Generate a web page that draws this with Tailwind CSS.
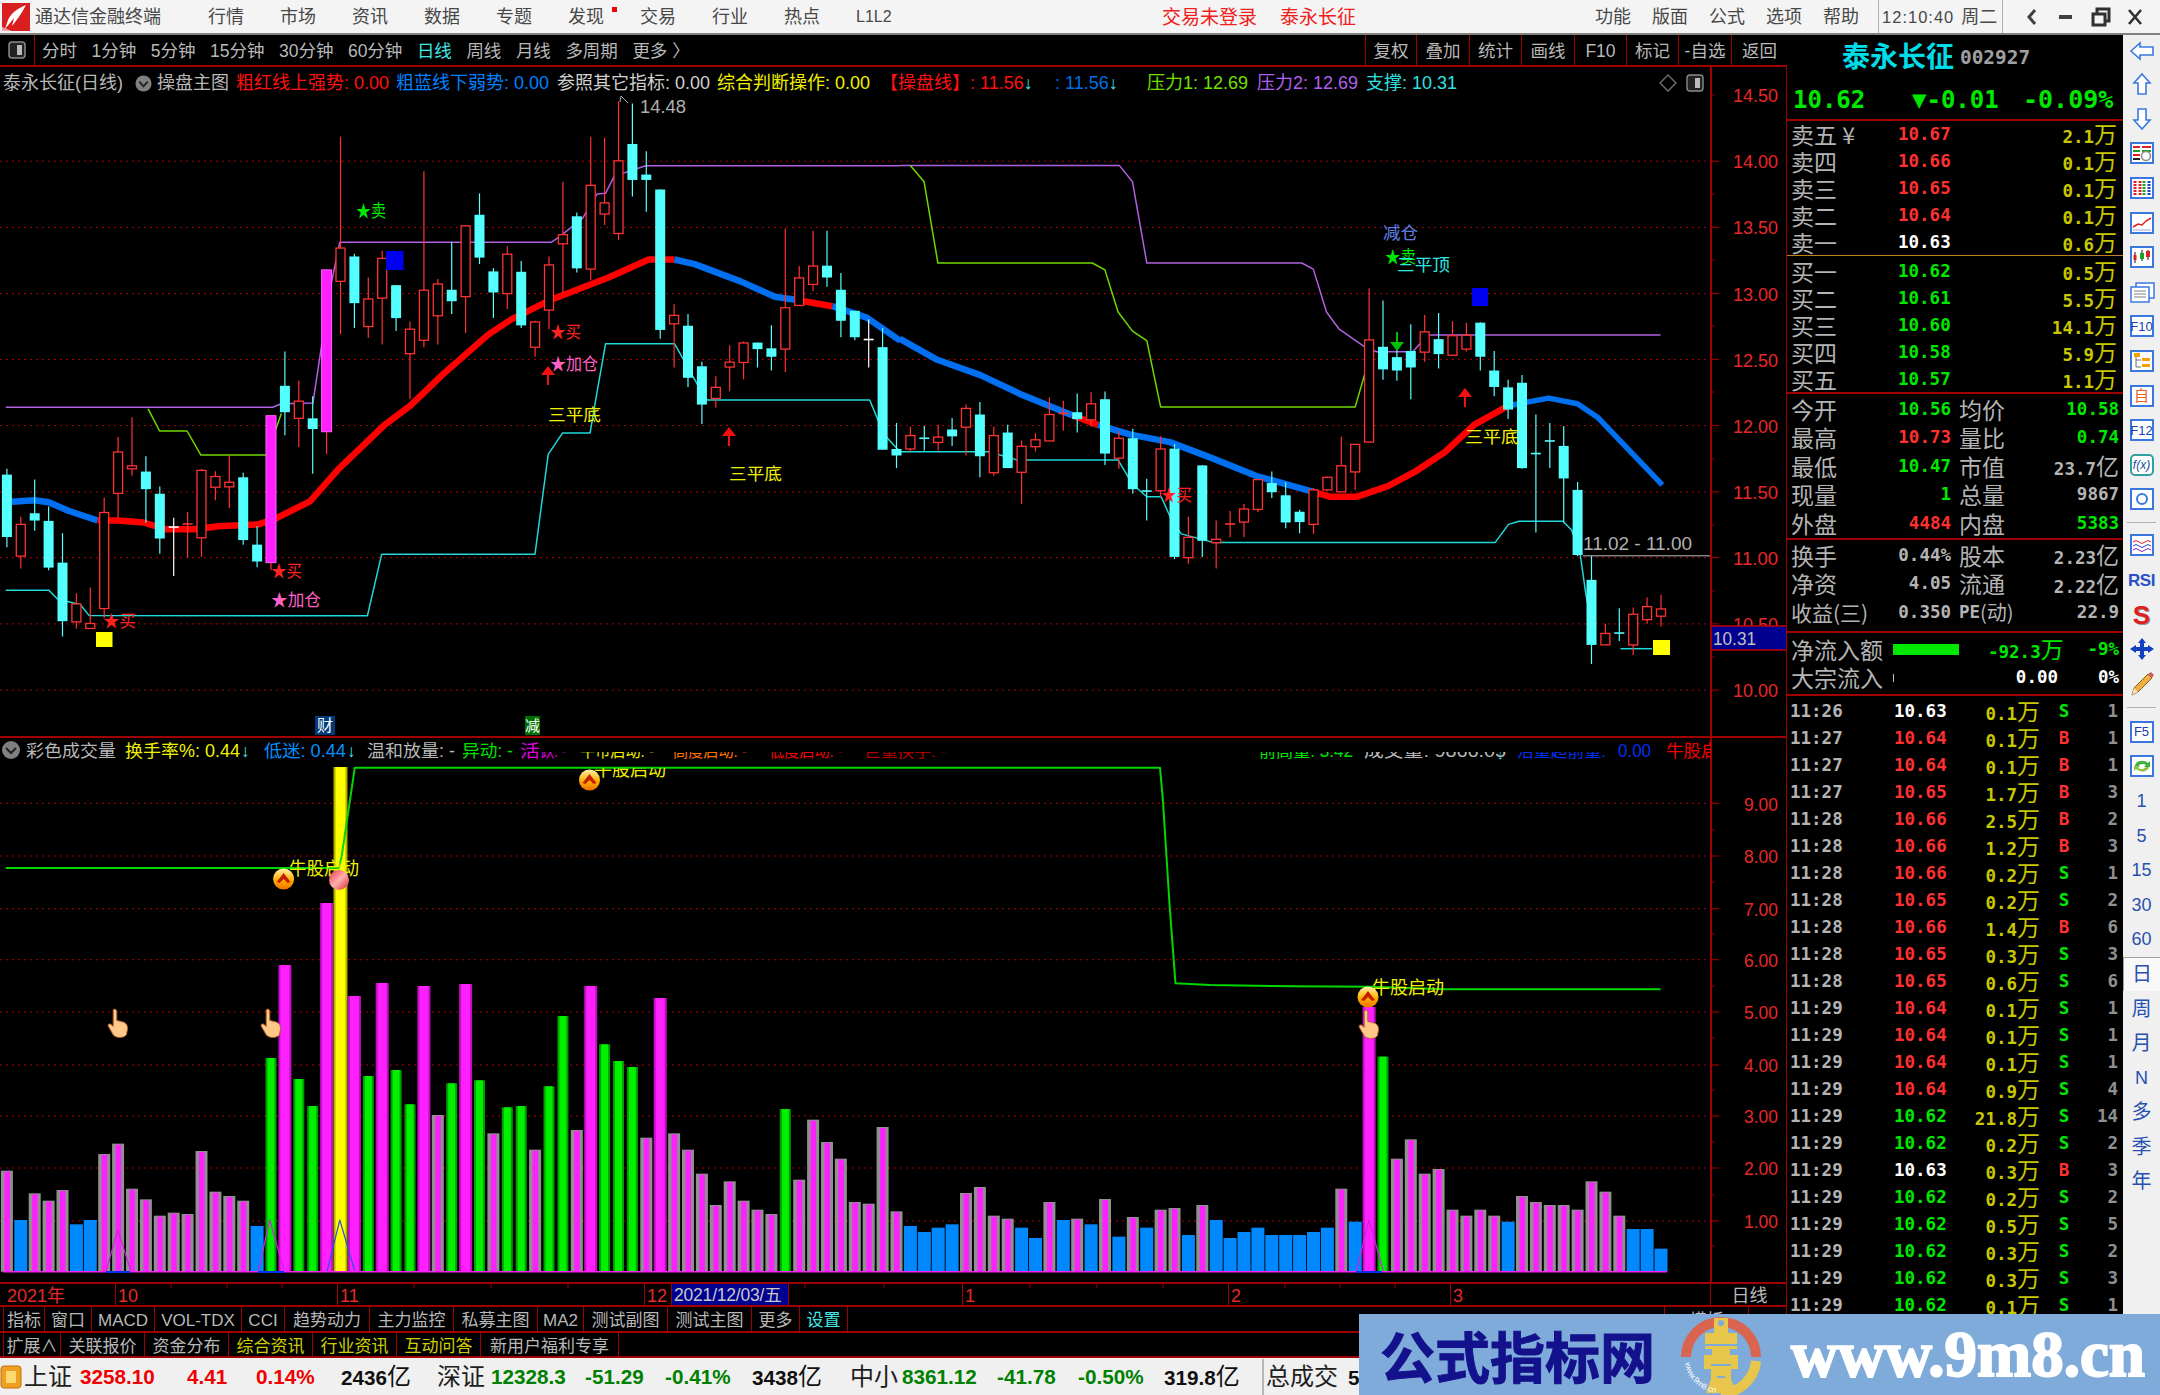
<!DOCTYPE html>
<html lang="zh">
<head>
<meta charset="utf-8">
<script src="https://cdn.jsdelivr.net/npm/@tailwindcss/browser@4"></script>
<title>通达信金融终端</title>
</head>
<body class="relative w-[2160px] h-[1395px] overflow-hidden bg-black [font-family:'Liberation_Sans','Noto_Sans_CJK_SC',sans-serif]">

<!-- title bar -->
<header class="h-[35px] flex items-center bg-[#f4f4f4] border-b-2 border-[#808080] text-[18px] text-[#484848] whitespace-nowrap leading-none">
  <svg class="ml-[2px] shrink-0" width="28" height="28" viewBox="0 0 28 28"><rect width="28" height="28" fill="#d81e1e"/><path d="M24 2 C16 5 9 10 6 17 L3 26 L12 15 L10 23 C15 17 20 10 24 2Z" fill="#fff"/><path d="M0 24 L0 28 L10 28Z" fill="#fff" opacity=".6"/></svg>
  <span class="ml-[5px] pt-[1px]">通达信金融终端</span>
  <nav class="ml-[47px] pt-[1px] flex gap-[36px]">
    <span>行情</span><span>市场</span><span>资讯</span><span>数据</span><span>专题</span>
    <span class="relative">发现<b class="absolute left-[44px] top-[-1px] w-[5px] h-[5px] bg-[#f00000]"></b></span>
    <span>交易</span><span>行业</span><span>热点</span><span class="text-[16px] pt-[1px] w-[35px]">L1L2</span>
  </nav>
  <span class="ml-[271px] pt-[1px] text-[19px] text-[#f02020]">交易未登录</span>
  <span class="ml-[23px] pt-[1px] text-[19px] text-[#f02020]">泰永长征</span>
  <nav class="ml-[239px] pt-[1px] flex gap-[21px]"><span>功能</span><span>版面</span><span>公式</span><span>选项</span><span>帮助</span></nav>
  <span class="ml-[19px] h-[33px] border-l border-[#b0b0b0]"></span>
  <span class="ml-[3px] pt-[1px] text-[16.5px] tracking-[1px]">12:10:40</span>
  <span class="ml-[7px] pt-[1px]">周二</span>
  <span class="ml-[5px] h-[33px] border-l border-[#b0b0b0]"></span>
  <svg class="ml-[22px]" width="14" height="20" viewBox="0 0 14 20"><path d="M10 3 L4 10 L10 17" fill="none" stroke="#404040" stroke-width="3"/></svg>
  <span class="ml-[20px] w-[13px] h-[4px] bg-[#404040]"></span>
  <svg class="ml-[19px]" width="20" height="20" viewBox="0 0 20 20"><rect x="6" y="2" width="12" height="12" fill="none" stroke="#303030" stroke-width="3"/><rect x="2" y="7" width="12" height="11" fill="#f4f4f4" stroke="#303030" stroke-width="3"/></svg>
  <svg class="ml-[16px]" width="16" height="20" viewBox="0 0 16 20"><path d="M2 3 L14 17 M14 3 L2 17" stroke="#303030" stroke-width="2.6"/></svg>
</header>

<div class="flex h-[1323px]">
  <!-- left column -->
  <main class="w-[1787px] shrink-0 flex flex-col">
    <!-- period toolbar -->
    <div class="h-[32px] shrink-0 flex items-center border-b-2 border-[#a00000] text-[17.5px] text-[#b8b8b8] whitespace-nowrap leading-none">
      <div class="w-[35px] h-full flex items-center justify-center border-r border-[#a00000]">
        <svg width="18" height="18" viewBox="0 0 18 18"><rect x="1" y="1" width="16" height="16" rx="3" fill="#222" stroke="#8a8a8a" stroke-width="1.5"/><rect x="9" y="4" width="5" height="10" fill="#bbb"/></svg>
      </div>
      <div class="ml-[7px] pt-[3px] flex gap-[14.5px]">
        <span>分时</span><span>1分钟</span><span>5分钟</span><span>15分钟</span><span>30分钟</span><span>60分钟</span><span class="text-[#40e8e8]">日线</span><span>周线</span><span>月线</span><span>多周期</span><span>更多 〉</span>
      </div>
      <div class="ml-auto h-full flex [&>span]:flex [&>span]:h-full [&>span]:items-center [&>span]:justify-center [&>span]:border-l [&>span]:border-[#a00000] [&>span]:pt-[3px]">
        <span class="w-[51px]">复权</span><span class="w-[53px]">叠加</span><span class="w-[52px]">统计</span><span class="w-[53px]">画线</span><span class="w-[52px]">F10</span><span class="w-[52px]">标记</span><span class="w-[53px]">-自选</span><span class="w-[56px]">返回</span>
      </div>
    </div>

    <!-- chart canvas -->
    <section class="relative h-[1215px] shrink-0 overflow-hidden">
      <svg id="chart" class="absolute inset-0 [&_text]:[transform:translateY(1px)]" width="1787" height="1215" viewBox="0 67 1787 1215" font-size="17.5">
        <defs>
          <linearGradient id="eg" x1="0" y1="0" x2="0" y2="1"><stop offset="0" stop-color="#fff2a8"/><stop offset=".55" stop-color="#ffb000"/><stop offset="1" stop-color="#ef7000"/></linearGradient>
          <linearGradient id="er" x1="0" y1="0" x2="1" y2="1"><stop offset="0" stop-color="#e83040"/><stop offset=".5" stop-color="#ffb0b0"/><stop offset="1" stop-color="#d82838"/></linearGradient>
          <g id="egg"><ellipse rx="10.5" ry="10.5" fill="url(#eg)"/><path d="M-7 3 L0 -6 L7 3 L4 4 L0 0 L-4 4Z" fill="#c42000"/></g>
          <g id="hand"><path transform="scale(1.2)" d="M-4 -12 C-2 -13 -1 -12 -1 -10 L-1 -3 L3 -2 C7 -1 8 1 8 4 L7 9 C5 12 -2 12 -4 9 L-8 2 C-9 0 -7 -1 -5 1 L-4 2 Z" fill="#ffc888" stroke="#a86028" stroke-width=".8"/></g>
          <clipPath id="halftext"><rect x="541" y="752" width="715" height="12"/></clipPath>
          <clipPath id="toptext"><rect x="590" y="768" width="90" height="14"/></clipPath>
          <clipPath id="axisclip"><rect x="1600" y="740" width="111" height="24"/></clipPath>
          <clipPath id="right-half"><rect x="1255" y="752" width="265" height="12"/></clipPath>
          <clipPath id="right-half2"><rect x="1510" y="752" width="100" height="12"/></clipPath>
        </defs>
        <g id="plot"></g>

        <!-- top chart marks -->
        <g>
          <path d="M620 102 L621 96 L628 103" fill="none" stroke="#b0b0b0"/>
          <text x="640" y="112" fill="#b0b0b0" textLength="46" lengthAdjust="spacingAndGlyphs">14.48</text>
          <text x="356" y="216" fill="#00e800" textLength="30" lengthAdjust="spacingAndGlyphs">★卖</text>
          <text x="103" y="626" fill="#ff2020" textLength="33" lengthAdjust="spacingAndGlyphs">★买</text>
          <text x="271" y="576" fill="#ff2020" textLength="31" lengthAdjust="spacingAndGlyphs">★买</text>
          <text x="271" y="605" fill="#ff60c8" textLength="50" lengthAdjust="spacingAndGlyphs">★加仓</text>
          <text x="550" y="337" fill="#ff2020" textLength="31" lengthAdjust="spacingAndGlyphs">★买</text>
          <text x="550" y="369" fill="#ff60c8" textLength="48" lengthAdjust="spacingAndGlyphs">★加仓</text>
          <text x="548" y="420" fill="#f0f000" textLength="53" lengthAdjust="spacingAndGlyphs">三平底</text>
          <text x="729" y="479" fill="#f0f000" textLength="53" lengthAdjust="spacingAndGlyphs">三平底</text>
          <text x="1383" y="238" fill="#6080e8" textLength="35" lengthAdjust="spacingAndGlyphs">减仓</text>
          <text x="1385" y="262" fill="#00e800" textLength="31" lengthAdjust="spacingAndGlyphs">★卖</text>
          <text x="1397" y="270" fill="#30e8e8" textLength="53" lengthAdjust="spacingAndGlyphs">三平顶</text>
          <text x="1465" y="442" fill="#f0f000" textLength="54" lengthAdjust="spacingAndGlyphs">三平底</text>
          <text x="1161" y="500" fill="#ff2020" textLength="31" lengthAdjust="spacingAndGlyphs">★买</text>
          <text x="1583" y="549" fill="#b0b0b0" textLength="109" lengthAdjust="spacingAndGlyphs">11.02 - 11.00</text>
          <path d="M548 366 l7 9 h-6 v10 h-2 v-10 h-6z" fill="#f01010"/>
          <path d="M729 427 l7 9 h-6 v10 h-2 v-10 h-6z" fill="#f01010"/>
          <path d="M1465 388 l7 9 h-6 v10 h-2 v-10 h-6z" fill="#f01010"/>
          <path d="M1397 351 l7 -9 h-6 v-10 h-2 v10 h-6z" fill="#00c000"/>
          <rect x="386" y="251" width="17.5" height="19" fill="#0000f0"/>
          <rect x="1472" y="288" width="16" height="18" fill="#0000f0"/>
          <rect x="96" y="632" width="16.5" height="15" fill="#ffff00"/>
          <rect x="1653" y="640" width="17" height="15" fill="#ffff00"/>
        </g>

        <!-- axis labels -->
        <g fill="#e82828">
          <text x="1733" y="101" textLength="45" lengthAdjust="spacingAndGlyphs">14.50</text>
          <text x="1733" y="167" textLength="45" lengthAdjust="spacingAndGlyphs">14.00</text>
          <text x="1733" y="233" textLength="45" lengthAdjust="spacingAndGlyphs">13.50</text>
          <text x="1733" y="300" textLength="45" lengthAdjust="spacingAndGlyphs">13.00</text>
          <text x="1733" y="366" textLength="45" lengthAdjust="spacingAndGlyphs">12.50</text>
          <text x="1733" y="432" textLength="45" lengthAdjust="spacingAndGlyphs">12.00</text>
          <text x="1733" y="498" textLength="45" lengthAdjust="spacingAndGlyphs">11.50</text>
          <text x="1733" y="564" textLength="45" lengthAdjust="spacingAndGlyphs">11.00</text>
          <text x="1733" y="630" textLength="45" lengthAdjust="spacingAndGlyphs">10.50</text>
          <text x="1733" y="696" textLength="45" lengthAdjust="spacingAndGlyphs">10.00</text>
          <text x="1744" y="810" textLength="34" lengthAdjust="spacingAndGlyphs">9.00</text>
          <text x="1744" y="862" textLength="34" lengthAdjust="spacingAndGlyphs">8.00</text>
          <text x="1744" y="915" textLength="34" lengthAdjust="spacingAndGlyphs">7.00</text>
          <text x="1744" y="966" textLength="34" lengthAdjust="spacingAndGlyphs">6.00</text>
          <text x="1744" y="1018" textLength="34" lengthAdjust="spacingAndGlyphs">5.00</text>
          <text x="1744" y="1071" textLength="34" lengthAdjust="spacingAndGlyphs">4.00</text>
          <text x="1744" y="1122" textLength="34" lengthAdjust="spacingAndGlyphs">3.00</text>
          <text x="1744" y="1174" textLength="34" lengthAdjust="spacingAndGlyphs">2.00</text>
          <text x="1744" y="1227" textLength="34" lengthAdjust="spacingAndGlyphs">1.00</text>
        </g>
        <rect x="1712" y="626" width="74" height="24" fill="#000090"/>
        <path d="M1712 626 H1786 M1712 650 H1786" stroke="#c00000" stroke-width="1.5"/>
        <text x="1713" y="644" fill="#c0c0c0" textLength="43" lengthAdjust="spacingAndGlyphs">10.31</text>

        <!-- news badges above the divider -->
        <rect x="315" y="716" width="20" height="19" fill="#003a78"/>
        <text x="317" y="730" fill="#fff" font-size="16">财</text>
        <rect x="525" y="716" width="15" height="19" fill="#007000"/>
        <text x="525" y="730" fill="#fff" font-size="15" textLength="15" lengthAdjust="spacingAndGlyphs">减</text>

        <!-- lower chart header -->
        <circle cx="11" cy="750" r="9" fill="#808080"/>
        <path d="M6 748 L11 753 L16 748" fill="none" stroke="#202020" stroke-width="2"/>
        <text x="26" y="756" fill="#b8b8b8" textLength="90" lengthAdjust="spacingAndGlyphs">彩色成交量</text>
        <text x="125" y="756" fill="#f0f000" textLength="115" lengthAdjust="spacingAndGlyphs">换手率%: 0.44</text>
        <text x="241" y="756" fill="#40e8f0">↓</text>
        <text x="264" y="756" fill="#0090ff" textLength="82" lengthAdjust="spacingAndGlyphs">低迷: 0.44</text>
        <text x="347" y="756" fill="#40e8f0">↓</text>
        <text x="367" y="756" fill="#b8b8b8" textLength="88" lengthAdjust="spacingAndGlyphs">温和放量: -</text>
        <text x="462" y="756" fill="#00e000" textLength="51" lengthAdjust="spacingAndGlyphs">异动: -</text>
        <text x="520" y="756" fill="#e000e0" textLength="20" lengthAdjust="spacingAndGlyphs">活</text>
        <g clip-path="url(#halftext)">
          <text x="541" y="756" fill="#e000e0" textLength="25" lengthAdjust="spacingAndGlyphs">跃: -</text>
          <text x="580" y="756" fill="#f0f000" textLength="74" lengthAdjust="spacingAndGlyphs">牛市启动: -</text>
          <text x="673" y="756" fill="#ff7000" textLength="74" lengthAdjust="spacingAndGlyphs">高度启动: -</text>
          <text x="769" y="756" fill="#f00000" textLength="74" lengthAdjust="spacingAndGlyphs">低度启动: -</text>
          <text x="864" y="756" fill="#b00000" textLength="82" lengthAdjust="spacingAndGlyphs">巨量换手: -</text>
        </g>
        <g clip-path="url(#right-half)">
          <text x="1259" y="756" fill="#00e000" textLength="94" lengthAdjust="spacingAndGlyphs">前高量: 3.42</text>
          <text x="1364" y="756" fill="#b8b8b8" textLength="142" lengthAdjust="spacingAndGlyphs">成交量: 9866.05</text>
        </g>
        <text x="1497" y="758" fill="#40e8f0" font-size="13">↓</text>
        <g clip-path="url(#right-half2)">
          <text x="1517" y="756" fill="#0030f0" textLength="89" lengthAdjust="spacingAndGlyphs">活量超前量:</text>
        </g>
        <text x="1618" y="756" fill="#0030f0" textLength="33" lengthAdjust="spacingAndGlyphs">0.00</text>
        <g clip-path="url(#axisclip)"><text x="1666" y="756" fill="#f00000" textLength="70" lengthAdjust="spacingAndGlyphs">牛股启动</text></g>

        <!-- lower chart marks -->
        <text x="289" y="874" fill="#f0f000" textLength="70" lengthAdjust="spacingAndGlyphs" font-size="18">牛股启动</text>
        <g clip-path="url(#toptext)"><text x="594" y="775" fill="#f0f000" textLength="72" lengthAdjust="spacingAndGlyphs" font-size="18">牛股启动</text></g>
        <text x="1372" y="993" fill="#f0f000" textLength="72" lengthAdjust="spacingAndGlyphs" font-size="18">牛股启动</text>
        <use href="#egg" x="283.6" y="879"/>
        <g transform="translate(339 880)"><ellipse rx="10" ry="10" fill="url(#er)"/></g>
        <use href="#egg" x="589.5" y="780"/>
        <use href="#egg" x="1368" y="997"/>
        <use href="#hand" x="118" y="1024"/>
        <use href="#hand" x="271" y="1024"/>
        <use href="#hand" x="1369" y="1025"/>
      </svg>

      <!-- top chart legend -->
      <div class="absolute left-0 top-[3px] h-[26px] pl-[3px] flex items-center text-[18px] leading-none whitespace-nowrap">
        <span class="w-[132px] text-[#b8b8b8]">泰永长征(日线)</span>
        <svg class="w-[17px] mr-[5px] shrink-0" width="17" height="17" viewBox="0 0 18 18"><circle cx="9" cy="9" r="8.5" fill="#808080"/><path d="M4.5 7 L9 12 L13.5 7" fill="none" stroke="#202020" stroke-width="2"/></svg>
        <span class="w-[79px] text-[#b8b8b8]">操盘主图</span>
        <span class="w-[160px] text-[#ff1010]">粗红线上强势: 0.00</span>
        <span class="w-[161px] text-[#0080ff]">粗蓝线下弱势: 0.00</span>
        <span class="w-[160px] text-[#d0d0d0]">参照其它指标: 0.00</span>
        <span class="w-[163px] text-[#f0f000]">综合判断操作: 0.00</span>
        <span class="w-[175px] text-[#ff1010]">【操盘线】: 11.56<b class="font-normal text-[#40e8f0]">↓</b></span>
        <span class="w-[92px] text-[#0070e0]">: 11.56<b class="font-normal text-[#40e8f0]">↓</b></span>
        <span class="w-[110px] text-[#70e000]">压力1: 12.69</span>
        <span class="w-[109px] text-[#b060f0]">压力2: 12.69</span>
        <span class="w-[100px] text-[#30e0e0]">支撑: 10.31</span>
      </div>
      <svg class="absolute left-[1658px] top-[6px]" width="48" height="20" viewBox="0 0 48 20"><path d="M10 2 L18 10 L10 18 L2 10Z" fill="none" stroke="#707070" stroke-width="1.4"/><rect x="29" y="2" width="16" height="16" rx="3" fill="#222" stroke="#8a8a8a" stroke-width="1.4"/><rect x="37" y="5" width="5" height="10" fill="#bbb"/></svg>
    </section>

    <!-- date axis -->
    <div class="relative h-[23px] shrink-0 flex items-center border-t-2 border-[#a00000] text-[18px] leading-none text-[#e82828] whitespace-nowrap [&>span]:h-full [&>span]:flex [&>span]:items-center [&>span]:shrink-0 [&>span]:border-r [&>span]:border-[#a00000] [&>span]:pl-[2px] [&>span]:pt-[2px]">
      <span class="w-[116px] !pl-[7px]">2021年</span>
      <span class="w-[222px]">10</span>
      <span class="w-[307px]">11</span>
      <span class="w-[27px]">12</span>
      <span class="w-[117px] bg-[#000090] text-[#c8c8c8] text-[17.5px] tracking-[-0.2px]">2021/12/03/五</span>
      <span class="w-[174px]"></span>
      <span class="w-[266px]">1</span>
      <span class="w-[222px]">2</span>
      <span class="w-[260px]">3</span>
      <span class="w-[76px] justify-center text-[#b8b8b8]">日线</span>
      <svg class="absolute left-0 top-0" width="1711" height="5"><path d="M171 0v4M227 0v4M282 0v4M414 0v4M491 0v4M568 0v4M805 0v4M884 0v4M1030 0v4M1097 0v4M1163 0v4M1285 0v4M1340 0v4M1395 0v4" stroke="#a00000"/></svg>
    </div>

    <!-- indicator tabs -->
    <div class="h-[26px] shrink-0 flex border-t-2 border-[#a00000] pl-[3px] text-[17px] leading-none text-[#b8b8b8] whitespace-nowrap [&>span]:flex [&>span]:items-center [&>span]:justify-center [&>span]:h-full [&>span]:shrink-0 [&>span]:border-r [&>span]:border-[#a00000] [&>span]:pt-[2px]">
      <span class="w-[42px] border-l border-[#a00000]">指标</span><span class="w-[47px]">窗口</span><span class="w-[63px]">MACD</span><span class="w-[87px]">VOL-TDX</span><span class="w-[43px]">CCI</span><span class="w-[85px]">趋势动力</span><span class="w-[84px]">主力监控</span><span class="w-[84px]">私募主图</span><span class="w-[46px]">MA2</span><span class="w-[84px]">测试副图</span><span class="w-[84px]">测试主图</span><span class="w-[48px]">更多</span><span class="w-[48px] text-[#40e8e8]">设置</span>
      <span class="w-[817px]"></span><span class="w-[84px]">模板</span><span class="w-[38px]"></span>
    </div>
    <div class="h-[27px] shrink-0 flex border-t-2 border-b-2 border-[#a00000] pl-[3px] text-[17px] leading-none text-[#b8b8b8] whitespace-nowrap [&>span]:flex [&>span]:items-center [&>span]:justify-center [&>span]:h-full [&>span]:shrink-0 [&>span]:border-r [&>span]:border-[#a00000] [&>span]:pt-[3px]">
      <span class="w-[58px] border-l border-[#a00000]">扩展∧</span><span class="w-[84px]">关联报价</span><span class="w-[84px]">资金分布</span><span class="w-[84px] text-[#d0d000]">综合资讯</span><span class="w-[84px] text-[#d0d000]">行业资讯</span><span class="w-[84px] text-[#d0d000]">互动问答</span><span class="w-[138px]">新用户福利专享</span>
    </div>
  </main>

  <!-- quote panel -->
  <aside class="w-[336px] shrink-0 flex flex-col bg-black text-[17.5px] font-bold leading-none text-[#b4b4b4] whitespace-nowrap [font-family:'DejaVu_Sans_Mono','Noto_Sans_CJK_SC',monospace] [&_i]:not-italic [&_i]:font-normal [&_i]:text-[23px] [&_i]:[font-family:'Noto_Sans_CJK_SC',sans-serif]">
    <div class="h-[45px] shrink-0 pl-[55px] pb-[5px] flex items-center">
      <span class="text-[28px] font-bold text-[#00dce8] [font-family:'Noto_Sans_CJK_SC',sans-serif]">泰永长征</span>
      <span class="ml-[6px] mt-[6px] text-[19.4px] text-[#a0a0a0]">002927</span>
    </div>
    <div class="h-[39px] shrink-0 pl-[6px] flex items-center text-[24px] text-[#00e800]">
      <span class="w-[119px]">10.62</span><span class="w-[111px]">▼-0.01</span><span class="text-[25px]">-0.09%</span>
    </div>
    <div class="h-[137px] shrink-0 border-t-2 border-[#a00000] pl-[4px] pr-[6px] grid grid-cols-[107px_53px_1fr] auto-rows-[27px] items-center border-b border-b-[#c08020] [&>:nth-child(3n)]:text-right [&>:nth-child(3n)]:text-[#c8c800]">
      <i>卖五 ¥</i><span class="text-[#ff3030]">10.67</span><span>2.1<i>万</i></span>
      <i>卖四</i><span class="text-[#ff3030]">10.66</span><span>0.1<i>万</i></span>
      <i>卖三</i><span class="text-[#ff3030]">10.65</span><span>0.1<i>万</i></span>
      <i>卖二</i><span class="text-[#ff3030]">10.64</span><span>0.1<i>万</i></span>
      <i>卖一</i><span class="text-white">10.63</span><span>0.6<i>万</i></span>
    </div>
    <div class="h-[138px] shrink-0 pt-[2px] border-b-2 border-[#a00000] pl-[4px] pr-[6px] grid grid-cols-[107px_53px_1fr] auto-rows-[27px] items-center [&>:nth-child(3n)]:text-right [&>:nth-child(3n)]:text-[#c8c800]">
      <i>买一</i><span class="text-[#00e800]">10.62</span><span>0.5<i>万</i></span>
      <i>买二</i><span class="text-[#00e800]">10.61</span><span>5.5<i>万</i></span>
      <i>买三</i><span class="text-[#00e800]">10.60</span><span>14.1<i>万</i></span>
      <i>买四</i><span class="text-[#00e800]">10.58</span><span>5.9<i>万</i></span>
      <i>买五</i><span class="text-[#00e800]">10.57</span><span>1.1<i>万</i></span>
    </div>
    <div class="h-[146px] shrink-0 pt-[1px] border-b-2 border-[#a00000] pl-[4px] pr-[4px] grid grid-cols-[107px_53px_60px_1fr] auto-rows-[28.5px] items-center [&>:nth-child(4n+2)]:text-right [&>:nth-child(4n+3)]:pl-[8px] [&>:nth-child(4n)]:text-right">
      <i>今开</i><span class="text-[#00e800]">10.56</span><i>均价</i><span class="text-[#00e800]">10.58</span>
      <i>最高</i><span class="text-[#ff3030]">10.73</span><i>量比</i><span class="text-[#00e800]">0.74</span>
      <i>最低</i><span class="text-[#00e800]">10.47</span><i>市值</i><span>23.7<i>亿</i></span>
      <i>现量</i><span class="text-[#00e800]">1</span><i>总量</i><span>9867</span>
      <i>外盘</i><span class="text-[#ff3030]">4484</span><i>内盘</i><span class="text-[#00e800]">5383</span>
    </div>
    <div class="h-[93px] shrink-0 pt-[1px] border-b-2 border-[#a00000] pl-[4px] pr-[4px] grid grid-cols-[107px_53px_60px_1fr] auto-rows-[28.5px] items-center [&>:nth-child(4n+2)]:text-right [&>:nth-child(4n+3)]:pl-[8px] [&>:nth-child(4n)]:text-right">
      <i>换手</i><span class="justify-self-end">0.44%</span><i>股本</i><span>2.23<i>亿</i></span>
      <i>净资</i><span>4.05</span><i>流通</i><span>2.22<i>亿</i></span>
      <i class="!text-[21px]">收益(三)</i><span>0.350</span><span class="flex items-center">PE<i class="!text-[20px]">(动)</i></span><span>22.9</span>
    </div>
    <div class="h-[63px] shrink-0 pt-[2px] border-b-2 border-[#a00000] pl-[4px] pr-[4px] grid grid-cols-[102px_95px_70px_1fr] auto-rows-[28.5px] items-center [&>:nth-child(4n+3)]:text-right [&>:nth-child(4n)]:text-right">
      <i>净流入额</i><span class="w-[66px] h-[11px] bg-[#00e800]"></span><span class="text-[#00e800]">-92.3<i>万</i></span><span class="text-[#00e800]">-9%</span>
      <i>大宗流入</i><span class="w-[1px] h-[8px] bg-[#c0c0c0]"></span><span class="text-white">0.00</span><span class="text-white">0%</span>
    </div>
    <div class="pt-[2px] grid grid-cols-[107px_52px_94px_48px_1fr] auto-rows-[27px] items-center overflow-hidden [&>:nth-child(5n+1)]:pl-[3px] [&>:nth-child(5n+3)]:text-right [&>:nth-child(5n+3)]:text-[#c8c800] [&>:nth-child(5n+4)]:text-center [&>:nth-child(5n)]:text-right [&>:nth-child(5n)]:pr-[5px] [&>:nth-child(5n)]:text-[#909090]">
      <span>11:26</span><span class="text-white">10.63</span><span>0.1<i>万</i></span><span class="text-[#00e800]">S</span><span>1</span>
      <span>11:27</span><span class="text-[#ff3030]">10.64</span><span>0.1<i>万</i></span><span class="text-[#ff3030]">B</span><span>1</span>
      <span>11:27</span><span class="text-[#ff3030]">10.64</span><span>0.1<i>万</i></span><span class="text-[#ff3030]">B</span><span>1</span>
      <span>11:27</span><span class="text-[#ff3030]">10.65</span><span>1.7<i>万</i></span><span class="text-[#ff3030]">B</span><span>3</span>
      <span>11:28</span><span class="text-[#ff3030]">10.66</span><span>2.5<i>万</i></span><span class="text-[#ff3030]">B</span><span>2</span>
      <span>11:28</span><span class="text-[#ff3030]">10.66</span><span>1.2<i>万</i></span><span class="text-[#ff3030]">B</span><span>3</span>
      <span>11:28</span><span class="text-[#ff3030]">10.66</span><span>0.2<i>万</i></span><span class="text-[#00e800]">S</span><span>1</span>
      <span>11:28</span><span class="text-[#ff3030]">10.65</span><span>0.2<i>万</i></span><span class="text-[#00e800]">S</span><span>2</span>
      <span>11:28</span><span class="text-[#ff3030]">10.66</span><span>1.4<i>万</i></span><span class="text-[#ff3030]">B</span><span>6</span>
      <span>11:28</span><span class="text-[#ff3030]">10.65</span><span>0.3<i>万</i></span><span class="text-[#00e800]">S</span><span>3</span>
      <span>11:28</span><span class="text-[#ff3030]">10.65</span><span>0.6<i>万</i></span><span class="text-[#00e800]">S</span><span>6</span>
      <span>11:29</span><span class="text-[#ff3030]">10.64</span><span>0.1<i>万</i></span><span class="text-[#00e800]">S</span><span>1</span>
      <span>11:29</span><span class="text-[#ff3030]">10.64</span><span>0.1<i>万</i></span><span class="text-[#00e800]">S</span><span>1</span>
      <span>11:29</span><span class="text-[#ff3030]">10.64</span><span>0.1<i>万</i></span><span class="text-[#00e800]">S</span><span>1</span>
      <span>11:29</span><span class="text-[#ff3030]">10.64</span><span>0.9<i>万</i></span><span class="text-[#00e800]">S</span><span>4</span>
      <span>11:29</span><span class="text-[#00e800]">10.62</span><span>21.8<i>万</i></span><span class="text-[#00e800]">S</span><span>14</span>
      <span>11:29</span><span class="text-[#00e800]">10.62</span><span>0.2<i>万</i></span><span class="text-[#00e800]">S</span><span>2</span>
      <span>11:29</span><span class="text-white">10.63</span><span>0.3<i>万</i></span><span class="text-[#ff3030]">B</span><span>3</span>
      <span>11:29</span><span class="text-[#00e800]">10.62</span><span>0.2<i>万</i></span><span class="text-[#00e800]">S</span><span>2</span>
      <span>11:29</span><span class="text-[#00e800]">10.62</span><span>0.5<i>万</i></span><span class="text-[#00e800]">S</span><span>5</span>
      <span>11:29</span><span class="text-[#00e800]">10.62</span><span>0.3<i>万</i></span><span class="text-[#00e800]">S</span><span>2</span>
      <span>11:29</span><span class="text-[#00e800]">10.62</span><span>0.3<i>万</i></span><span class="text-[#00e800]">S</span><span>3</span>
      <span>11:29</span><span class="text-[#00e800]">10.62</span><span>0.1<i>万</i></span><span class="text-[#00e800]">S</span><span>1</span>
    </div>
  </aside>

  <!-- icon rail -->
  <div class="w-[37px] shrink-0 flex flex-col items-center bg-[#f0f0f0] text-[#2850b0] text-[18px] leading-none [&>div]:h-[34.6px] [&>div]:w-full [&>div]:shrink-0 [&>div]:flex [&>div]:items-center [&>div]:justify-center [&_b]:w-[24px] [&_b]:h-[22px] [&_b]:border-2 [&_b]:border-[#3a78e0] [&_b]:bg-white [&_b]:flex [&_b]:items-center [&_b]:justify-center [&_b]:text-[13px] [&_b]:font-normal">
    <div class="!h-[32px]"><svg width="26" height="20" viewBox="0 0 26 20"><path d="M2 10 L11 2 V6 H24 V14 H11 V18Z" fill="#fff" stroke="#3a78e0" stroke-width="1.6"/></svg></div>
    <div><svg width="20" height="24" viewBox="0 0 20 24"><path d="M10 2 L18 11 H14 V22 H6 V11 H2Z" fill="#fff" stroke="#3a78e0" stroke-width="1.6"/></svg></div>
    <div><svg width="20" height="24" viewBox="0 0 20 24"><path d="M10 22 L18 13 H14 V2 H6 V13 H2Z" fill="#fff" stroke="#3a78e0" stroke-width="1.6"/></svg></div>
    <div><b><svg width="20" height="18" viewBox="0 0 20 18"><path d="M1 3H8M10 3H19" stroke="#e02020" stroke-width="2"/><path d="M1 7H8M10 7H19" stroke="#20a020" stroke-width="2"/><path d="M1 11H8" stroke="#e02020" stroke-width="2"/><path d="M1 15H8" stroke="#202020" stroke-width="2"/><circle cx="14" cy="12" r="4.5" fill="#fff" stroke="#909090" stroke-width="1.6"/></svg></b></div>
    <div><b><svg width="20" height="18" viewBox="0 0 20 18"><path d="M3 2V16M8 2V16" stroke="#e02020" stroke-width="3" stroke-dasharray="2 1"/><path d="M12 2V16" stroke="#20a020" stroke-width="3" stroke-dasharray="2 1"/><path d="M17 2V16" stroke="#2040d0" stroke-width="3" stroke-dasharray="2 1"/></svg></b></div>
    <div><b><svg width="20" height="18" viewBox="0 0 20 18"><path d="M1 13 L6 10 L10 11 L14 7 L19 4" fill="none" stroke="#e02020" stroke-width="1.5"/><path d="M1 16H19" stroke="#a0a0d0"/></svg></b></div>
    <div><b><svg width="20" height="18" viewBox="0 0 20 18"><path d="M3 4V15M10 2V13M16 2V12" stroke="#101010"/><rect x="1.5" y="7" width="3" height="5" fill="#e02020"/><rect x="8" y="5" width="4" height="6" fill="#20a020"/><rect x="14" y="3" width="4" height="6" fill="#e02020"/></svg></b></div>
    <div><svg width="26" height="22" viewBox="0 0 26 22"><rect x="7" y="2" width="18" height="15" fill="#fff" stroke="#3a78e0" stroke-width="1.5"/><rect x="2" y="6" width="18" height="15" fill="#fff" stroke="#3a78e0" stroke-width="1.5"/><path d="M5 10H17M5 13H17M5 16H17" stroke="#808080"/></svg></div>
    <div><b class="text-[#2040b0]">F10</b></div>
    <div><b><svg width="20" height="18" viewBox="0 0 20 18"><path d="M4 2V15H9M4 8H9" fill="none" stroke="#707070"/><rect x="2" y="1" width="6" height="4" fill="#f0a000"/><rect x="10" y="6" width="8" height="3" fill="#f0a000"/><rect x="10" y="12" width="8" height="3" fill="#f0a000"/></svg></b></div>
    <div><b class="!text-[15px] !text-[#e86020]">自</b></div>
    <div><b class="text-[#2040b0]">F12</b></div>
    <div><b class="!rounded-[5px] !border-[#30a0a0] !text-[12px] !text-[#1050a0] italic">f(x)</b></div>
    <div><b><svg width="18" height="14" viewBox="0 0 18 14"><circle cx="9" cy="7" r="5" fill="none" stroke="#3a78e0" stroke-width="2"/></svg></b></div>
    <span class="h-[11.4px] w-[29px] shrink-0 flex items-center"><span class="w-full h-[1px] bg-[#b0b0b0]"></span></span>
    <div><b><svg width="20" height="16" viewBox="0 0 20 16"><path d="M1 5 Q4 2 7 5 T13 5 T19 5" fill="none" stroke="#e02020"/><path d="M1 9 Q4 6 7 9 T13 9 T19 9" fill="none" stroke="#2040d0"/><path d="M1 13 Q4 10 7 13 T13 13 T19 13" fill="none" stroke="#8020c0"/></svg></b></div>
    <div><span class="text-[#2a50c8] font-bold text-[17px] tracking-[-0.5px]">RSI</span></div>
    <div><span class="text-[#e02020] font-bold text-[26px] [text-shadow:1px_1px_0_#909090]">S</span></div>
    <div><svg width="26" height="24" viewBox="0 0 26 24"><path d="M13 1 L17 6 H15 V10 H19 V8 L25 12 L19 16 V14 H15 V18 H17 L13 23 L9 18 H11 V14 H7 V16 L1 12 L7 8 V10 H11 V6 H9Z" fill="#1040c0"/></svg></div>
    <div><svg width="26" height="26" viewBox="0 0 26 26"><path d="M3 24 L5 17 L19 3 L23 7 L9 21Z" fill="#f0b040" stroke="#806020"/><path d="M3 24 L5 17 L9 21Z" fill="#f8e0c0"/><path d="M19 3 L23 7 L25 4 L22 1Z" fill="#d06060"/></svg></div>
    <span class="h-[13.4px] w-[29px] shrink-0 flex items-center"><span class="w-full h-[1px] bg-[#b0b0b0]"></span></span>
    <div><b class="text-[#2040b0]">F5</b></div>
    <div><b><svg width="20" height="16" viewBox="0 0 20 16"><path d="M3 8 C3 3 12 1 16 5 L18 3 V9 H12 L14 7 C11 5 7 6 6 9Z" fill="#40b040"/><path d="M17 9 C16 14 8 15 4 11 L2 13 V8 H8 L6 10 C9 12 12 11 14 9Z" fill="#90c040"/></svg></b></div>
    <div>1</div><div>5</div><div>15</div><div>30</div><div>60</div>
    <div class="border-t border-l border-[#a0a0a0] bg-[#f8f8f8] text-[20px]">日</div>
    <div class="text-[20px]">周</div><div class="text-[20px]">月</div><div>N</div><div class="text-[20px]">多</div><div class="text-[20px]">季</div><div class="text-[20px]">年</div>
  </div>
</div>

<!-- index status bar -->
<footer class="h-[37px] pt-[1px] flex items-center bg-[#f0f0f0] text-[20.7px] font-bold leading-none whitespace-nowrap [&_i]:not-italic [&_i]:font-normal [&_i]:text-[24px]">
  <svg class="w-[24px] shrink-0" width="24" height="26" viewBox="0 0 24 26"><rect x="1" y="2" width="20" height="22" rx="3" fill="#f0a020" stroke="#c07010"/><rect x="6" y="7" width="10" height="12" fill="#ffd870"/></svg>
  <span class="w-[56px] font-normal text-[24px] text-[#202020]">上证</span>
  <span class="w-[107px] text-[#f00000]">3258.10</span><span class="w-[69px] text-[#f00000]">4.41</span><span class="w-[85px] text-[#f00000]">0.14%</span>
  <span class="w-[96px] text-[#101010]">2436<i>亿</i></span>
  <span class="w-[54px] font-normal text-[24px] text-[#202020]">深证</span>
  <span class="w-[94px] text-[#008000]">12328.3</span><span class="w-[80px] text-[#008000]">-51.29</span><span class="w-[87px] text-[#008000]">-0.41%</span>
  <span class="w-[98px] text-[#101010]">3438<i>亿</i></span>
  <span class="w-[52px] font-normal text-[24px] text-[#202020]">中小</span>
  <span class="w-[95px] text-[#008000]">8361.12</span><span class="w-[81px] text-[#008000]">-41.78</span><span class="w-[86px] text-[#008000]">-0.50%</span>
  <span class="w-[98px] text-[#101010]">319.8<i>亿</i></span>
  <span class="h-full w-[4px] border-l-2 border-[#b8b8b8]"></span>
  <span class="w-[76px] font-normal text-[24px] text-[#202020]">总成交</span>
  <span class="ml-[6px] text-[#101010]">5079<i>亿</i></span>
</footer>

<!-- site watermark -->
<div class="absolute right-0 bottom-0 w-[801px] h-[81px] bg-[#7fabdb] flex items-center pl-[21px] whitespace-nowrap leading-none">
  <span class="w-[272px] shrink-0 text-[55px] font-bold text-[#14118c] [font-family:'Noto_Sans_CJK_SC',sans-serif] [-webkit-text-stroke:1px_#14118c]">公式指标网</span>
  <svg class="ml-[29px] shrink-0" width="80" height="80" viewBox="0 0 80 80">
    <path d="M5 42 A35 35 0 0 1 75 42" fill="none" stroke="#d96450" stroke-width="10"/>
    <path d="M75 46 A35 35 0 0 1 40 78" fill="none" stroke="#e8c64b" stroke-width="10"/>
    <path d="M33 3 H47 V18 H56 V34 H49 V40 H57 V54 H50 V64 L55 78 H25 L30 64 V54 H23 V40 H31 V34 H24 V18 H33Z" fill="#e8c64b"/>
    <circle cx="40" cy="8" r="3" fill="#7fabdb"/>
    <path d="M24 30H56M30 50H50M36 62H44" stroke="#7fabdb" stroke-width="2"/>
    <path id="wmarc" d="M4 48 A36 36 0 0 0 37 78" fill="none"/>
    <text font-size="8" fill="#fff"><textPath href="#wmarc">www.9m8.cn</textPath></text>
  </svg>
  <span class="ml-[30px] text-[65px] font-bold text-white [font-family:'Liberation_Serif',serif] [-webkit-text-stroke:2px_white]">www.9m8.cn</span>
</div>

<script>
(function () {
  var Kx = function (i) { return 6.9 + 13.9 * i; };
  var Ky = function (z) { return 90 + z / 2.613; };
  // colour: c cyan, r red hollow, m magenta, w white doji, d red doji, e cyan doji
  var K = [
   ['c',990,1005,1168,1195],['r',1115,1135,1218,1250],['c',1018,1106,1125,1152],['c',1088,1126,1248,1255],['c',1158,1235,1388,1428],
   ['r',1315,1343,1390,1408],['r',1300,1394,1407,1407],['r',1065,1104,1355,1380],['r',907,946,1054,1118],['r',855,982,990,1008],
   ['c',957,997,1043,1130],['c',1036,1055,1172,1212],['w',1118,1142,1144,1270],['d',1103,1134,1136,1222],['r',990,994,1170,1220],
   ['r',996,1010,1038,1072],['r',955,1025,1037,1092],['c',1000,1012,1176,1188],['c',1140,1188,1232,1247],['m',851,851,1235,1255],
   ['c',683,773,842,902],['r',760,813,858,933],['c',800,858,886,1003],['m',470,470,893,952],['r',122,413,500,638],
   ['c',428,435,557,622],['r',490,546,618,648],['r',420,440,544,665],['c',510,510,596,630],['r',605,625,689,808],
   ['r',212,523,654,672],['r',494,507,590,665],['c',398,522,552,585],['r',353,355,540,635],['c',270,326,438,455],
   ['c',465,474,529,596],['r',408,429,532,572],['c',447,475,615,622],['r',603,606,672,697],['r',435,457,575,625],
   ['r',240,378,402,530],['c',320,330,466,477],['r',122,249,468,497],['r',125,295,324,353],['r',30,185,375,392],
   ['c',35,141,235,278],['c',160,221,235,318],['c',260,260,627,650],['r',560,589,611,725],['c',585,616,752,776],
   ['c',710,722,822,873],['r',748,777,806,830],['r',667,711,724,787],['r',657,661,712,756],['c',660,660,677,725],
   ['c',615,675,697,733],['r',362,569,677,737],['r',460,491,563,563],['r',368,460,508,525],['c',368,459,490,514],
   ['c',478,522,603,646],['c',577,577,646,654],['w',600,652,654,725],['c',622,672,940,940],['c',870,938,955,988],
   ['r',880,903,938,944],['e',878,910,916,942],['r',875,907,921,942],['c',857,887,905,930],['r',822,832,881,955],
   ['c',815,848,957,1012],['r',880,903,1000,1008],['c',875,895,988,988],['r',916,931,999,1082],['r',897,914,932,945],
   ['r',803,848,917,917],['d',812,845,849,890],['c',793,842,860,895],['r',790,820,862,880],['c',788,808,950,980],
   ['r',892,910,962,990],['c',885,910,1043,1055],['e',1016,1048,1055,1125],['r',905,938,1047,1065],['c',925,937,1220,1226],
   ['r',1115,1169,1222,1238],['c',980,981,1178,1220],['r',1125,1174,1183,1250],['d',1100,1134,1140,1168],['r',1082,1095,1129,1168],
   ['r',1017,1018,1096,1103],['c',997,1027,1051,1066],['c',1025,1059,1130,1145],['c',1097,1102,1129,1158],['r',1040,1045,1135,1160],
   ['r',1010,1012,1045,1047],['r',906,982,1050,1050],['r',925,926,998,1045],['r',518,653,920,920],['c',550,671,730,757],
   ['c',660,698,733,760],['c',612,682,725,808],['r',588,632,685,710],['c',583,651,690,728],['r',604,642,693,695],
   ['r',608,641,677,683],['c',607,608,697,733],['c',682,733,776,800],['c',757,777,835,860],['c',745,765,988,990],
   ['e',848,950,956,1156],['e',870,917,921,988],['c',878,930,1015,1130],['c',1024,1045,1215,1218],['c',1218,1280,1450,1500],
   ['r',1395,1420,1450,1450],['e',1354,1419,1421,1440],['r',1352,1370,1450,1477],['r',1326,1350,1384,1395],['r',1318,1356,1375,1402]
  ];
  var V = 'S512 B660 S580 S602 S570 B673 B660 S462 S431 S566 S598 S647 S638 S642 S453 S575 S588 S602 B678 G174 M-105 G237 G318 M-291 Y-699 M-12 G228 M-51 G210 G313 M-42 S345 G250 M-48 G241 S400 G322 G318 S449 G259 G48 S390 M-42 G133 G183 G201 S413 M-6 S400 S449 S521 S615 S544 S602 S629 S642 G327 S539 S359 S426 S476 S606 S611 S381 S634 B678 B696 B683 B673 S579 S561 S647 S656 B683 B714 S606 B660 S656 B673 S597 B710 S651 B683 S629 S624 B705 S615 B660 B714 B696 B683 B705 B705 B705 B696 B683 S566 B665 M21 G170 S476 S418 S521 S507 S629 S647 S629 S647 B665 S588 S606 S615 S615 S629 S544 S575 S647 B687 B687 B746'.split(' ');

  var s = '';
  var RED = '#a00000';
  function line(d, c, w) { s += '<path d="' + d + '" fill="none" stroke="' + c + '" stroke-width="' + w + '" stroke-linejoin="round"/>'; }
  function poly(off, ptsList, c, w, yfn) {
    var d = '';
    for (var i = 0; i < ptsList.length; i += 2) {
      d += (i ? 'L' : 'M') + (off + ptsList[i] / 1.742).toFixed(1) + ' ' + yfn(ptsList[i + 1]).toFixed(1);
    }
    line(d, c, w);
  }
  function lowY(z) { return 700 + z / 3; }

  // grid
  [161.2,227.4,293.6,359.4,425.6,491.9,557.7,623.9,690,803.3,856,908.7,959.7,1012,1065,1116,1168,1221].forEach(function (y) {
    s += '<line x1="0" x2="1710" y1="' + y + '" y2="' + y + '" stroke="#b00000" stroke-dasharray="2 4"/>';
    s += '<line x1="1711" x2="1719" y1="' + y + '" y2="' + y + '" stroke="#b00000"/>';
  });
  [95,194,260,326,392,459,525,591,657,830,882,934,986,1038,1090,1142,1195,1246].forEach(function (y) {
    s += '<line x1="1711" x2="1714" y1="' + y + '" y2="' + y + '" stroke="#b00000"/>';
  });
  line('M1711 67V1282', RED, 2);
  line('M1787 67V1282', RED, 2);
  line('M0 737H1787', RED, 2.2);

  // thin support/pressure lines
  var P = '#b060e0', GN = '#70d800', CY = '#20d8d8';
  poly(0,[10,829,475,829,490,820,545,818,558,690,575,520,592,398,960,398,975,383,1015,335,1040,272,1055,270,1070,225,1125,198,1568,198],P,1.5,Ky);
  poly(900,[0,197,382,197,405,240,430,452,700,452,720,468,743,580,765,625,810,672,830,684,893,684,920,640,1325,640],P,1.5,Ky);
  poly(0,[258,833,278,891,326,891,350,954,465,954,490,845],GN,1.5,Ky);
  poly(900,[18,197,42,240,66,452,335,452,357,470,380,580,405,630,430,655,454,828,793,828,810,740,817,700],GN,1.5,Ky);
  poly(0,[10,1307,85,1307,100,1330,140,1345,155,1373,640,1374,665,1213,932,1213,955,952,980,896,1028,896,1040,790,1055,663,1175,663,1215,770,1232,810,1515,810,1540,900,1568,945],CY,1.5,Ky);
  poly(900,[0,945,155,945,205,967,380,967,405,1030,430,1063,455,1063,475,1130,490,1160,545,1182,1037,1182,1060,1135,1078,1127,1155,1127,1170,1150,1185,1215,1195,1320,1205,1400],CY,1.5,Ky);
  poly(900,[1255,1460,1310,1460],CY,1.5,Ky);
  line('M1583 555.7H1710', '#808080', 1.5);

  // thick trend line
  var R = '#ff0000', B = '#0070f0', TW = 6.5;
  poly(0,[20,1076,60,1072,85,1077,120,1100,170,1125],B,TW,Ky);
  poly(0,[170,1125,205,1125,250,1130,290,1148,340,1148,380,1140,450,1135,480,1120,540,1075,590,990,670,875,715,825,770,745,850,640,890,600,960,548,1060,490,1130,443,1175,443],R,TW,Ky);
  poly(0,[1175,443,1210,455,1290,500,1350,540,1385,548],B,TW,Ky);
  poly(0,[1385,548,1450,565],R,TW,Ky);
  poly(0,[1450,565,1510,595,1568,655],B,TW,Ky);
  poly(900,[0,650,65,705,140,745,210,795,300,850],B,TW,Ky);
  poly(900,[300,850,345,875],R,TW,Ky);
  poly(900,[345,875,400,900,470,920,540,960,620,1008,720,1050],B,TW,Ky);
  poly(900,[720,1050,750,1063,795,1063,850,1035,900,995,950,945,1000,875,1060,825],R,TW,Ky);
  poly(900,[1060,825,1130,805,1180,820,1215,855,1328,1032],B,TW - 1,Ky);

  // candles
  K.forEach(function (k, i) {
    var x = Kx(i), c = k[0], t = Ky(k[1]), a = Ky(k[2]), b = Ky(k[3]), e = Ky(k[4]);
    var col = (c === 'c' || c === 'e') ? '#54ffff' : (c === 'w' ? '#ffffff' : '#ff3232');
    var wick = c === 'm' ? '#ff3232' : col;
    s += '<line x1="' + x + '" x2="' + x + '" y1="' + t + '" y2="' + e + '" stroke="' + wick + '" stroke-width="1.2"/>';
    if (c === 'c') s += '<rect x="' + (x - 5) + '" y="' + a + '" width="10" height="' + (b - a) + '" fill="' + col + '"/>';
    else if (c === 'm') s += '<rect x="' + (x - 5) + '" y="' + a + '" width="10" height="' + (b - a) + '" fill="#ff20ff" stroke="#ff60ff"/>';
    else if (c === 'r') s += '<rect x="' + (x - 4.5) + '" y="' + a + '" width="9" height="' + (b - a) + '" fill="#000" stroke="' + col + '" stroke-width="1.3"/>';
    else s += '<line x1="' + (x - 5) + '" x2="' + (x + 5) + '" y1="' + a + '" y2="' + a + '" stroke="' + col + '" stroke-width="1.6"/>';
  });

  // volume bars
  var base = 1271.7;
  V.forEach(function (v, i) {
    var x = Kx(i), t = v[0], y = 1000 + parseFloat(v.slice(1)) / 3, h = base - y;
    if (t === 'S') {
      s += '<rect x="' + (x - 6) + '" y="' + y + '" width="12" height="' + h + '" fill="#909090"/>';
      s += '<rect x="' + (x - 2.5) + '" y="' + (y + 1) + '" width="5.5" height="' + (h - 1) + '" fill="#ff20ff"/>';
    } else if (t === 'B') {
      s += '<rect x="' + (x - 6.5) + '" y="' + y + '" width="13" height="' + h + '" fill="#0088ff"/>';
    } else if (t === 'G') {
      s += '<rect x="' + (x - 5.5) + '" y="' + y + '" width="11" height="' + h + '" fill="#00a000"/>';
      s += '<rect x="' + (x - 3.5) + '" y="' + y + '" width="7" height="' + h + '" fill="#00f000"/>';
    } else if (t === 'M') {
      s += '<rect x="' + (x - 6.5) + '" y="' + y + '" width="13" height="' + h + '" fill="#c010c0"/>';
      s += '<rect x="' + (x - 4.5) + '" y="' + y + '" width="9" height="' + h + '" fill="#ff20ff"/>';
    } else {
      s += '<rect x="' + (x - 7) + '" y="' + y + '" width="14" height="' + h + '" fill="#b0b000"/>';
      s += '<rect x="' + (x - 5) + '" y="' + y + '" width="10" height="' + h + '" fill="#ffff00"/>';
    }
  });
  line('M3 1271.7H1667', '#ff20ff', 1.5);
  line('M106 1272H130 M258 1272H284 M1356 1272H1382', '#0030f0', 2);
  poly(0,[185,813,205,690,228,813],'#d020e0',1.2,function(z){return 1000+z/3;});
  poly(0,[450,813,470,660,495,813],'#d020e0',1.2,function(z){return 1000+z/3;});
  poly(0,[570,813,592,660,618,813],'#3050f0',1.2,function(z){return 1000+z/3;});
  poly(900,[795,813,817,660,842,813],'#d020e0',1.2,function(z){return 1000+z/3;});

  // lower green step line
  poly(0,[10,504,590,504,595,470,618,203,1568,203],'#00d800',2,lowY);
  poly(900,[0,203,453,203,458,300,470,625,480,850,540,855,685,859,820,860,950,868,1325,868],'#00d800',2,lowY);

  document.getElementById('plot').innerHTML = s;
})();
</script>
</body>
</html>
